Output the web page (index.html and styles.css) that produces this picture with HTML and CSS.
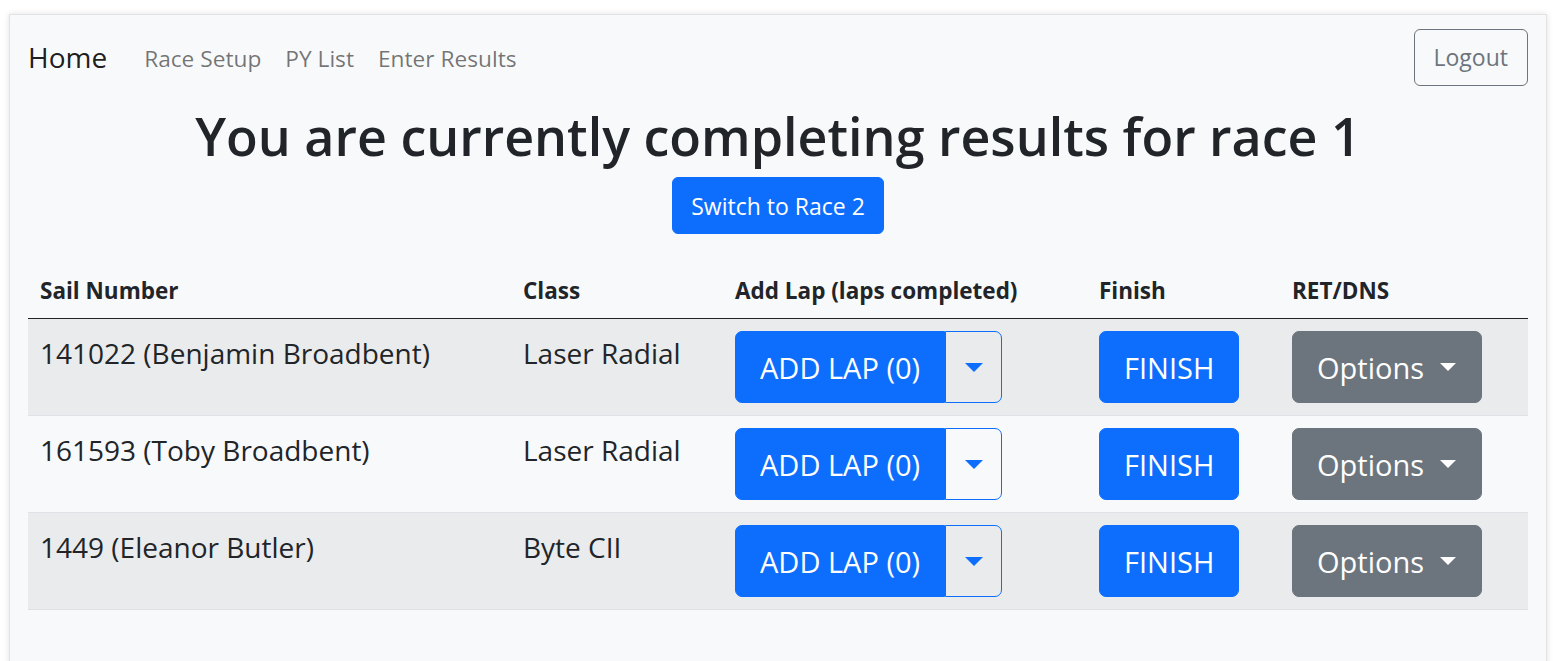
FILE: index.html
```html
<!DOCTYPE html>
<html lang="en">
<head>
<meta charset="utf-8">
<title>Enter Results</title>
<link rel="stylesheet" href="styles.css">
</head>
<body>
<div class="page">
  <nav class="navbar">
    <div class="nav-left">
      <a class="brand" href="#">Home</a>
      <ul class="nav-links">
        <li><a class="nav-link" href="#">Race Setup</a></li>
        <li><a class="nav-link" href="#">PY List</a></li>
        <li><a class="nav-link" href="#">Enter Results</a></li>
      </ul>
    </div>
    <button class="btn btn-outline-secondary" type="button">Logout</button>
  </nav>
  <main class="content">
    <h1 class="title">You are currently completing results for race 1</h1>
    <div class="switch-row">
      <button class="btn btn-primary" type="button">Switch to Race 2</button>
    </div>
    <table class="results">
      <colgroup>
        <col class="c-sail"><col class="c-class"><col class="c-lap"><col class="c-finish"><col class="c-opts">
      </colgroup>
      <thead>
        <tr><th>Sail Number</th><th>Class</th><th>Add Lap (laps completed)</th><th>Finish</th><th>RET/DNS</th></tr>
      </thead>
      <tbody>
        <tr class="odd">
          <td>141022 (Benjamin Broadbent)</td>
          <td>Laser Radial</td>
          <td><div class="btn-group"><button class="btn-lg btn-primary split-main" type="button">ADD LAP (0)</button><button class="btn-lg split-toggle" type="button"><span class="caret caret-blue"></span></button></div></td>
          <td><button class="btn-lg btn-primary" type="button">FINISH</button></td>
          <td><button class="btn-lg btn-secondary" type="button">Options<span class="caret caret-white"></span></button></td>
        </tr>
        <tr>
          <td>161593 (Toby Broadbent)</td>
          <td>Laser Radial</td>
          <td><div class="btn-group"><button class="btn-lg btn-primary split-main" type="button">ADD LAP (0)</button><button class="btn-lg split-toggle" type="button"><span class="caret caret-blue"></span></button></div></td>
          <td><button class="btn-lg btn-primary" type="button">FINISH</button></td>
          <td><button class="btn-lg btn-secondary" type="button">Options<span class="caret caret-white"></span></button></td>
        </tr>
        <tr class="odd">
          <td>1449 (Eleanor Butler)</td>
          <td>Byte CII</td>
          <td><div class="btn-group"><button class="btn-lg btn-primary split-main" type="button">ADD LAP (0)</button><button class="btn-lg split-toggle" type="button"><span class="caret caret-blue"></span></button></div></td>
          <td><button class="btn-lg btn-primary" type="button">FINISH</button></td>
          <td><button class="btn-lg btn-secondary" type="button">Options<span class="caret caret-white"></span></button></td>
        </tr>
      </tbody>
    </table>
  </main>
</div>
</body>
</html>
```
FILE: styles.css
```css
* { box-sizing: border-box; }

html, body {
  margin: 0;
  padding: 0;
  background: #ffffff;
  font-family: "Open Sans", "Noto Sans", sans-serif;
  color: #212529;
}

.page {
  margin: 14px 11px 0 9px;
  min-height: 720px;
  background: #f8f9fa;
  border: 1px solid #e1e3e5;
  box-shadow: 0 0 6px rgba(0, 0, 0, 0.12);
}

/* Navbar */
.navbar {
  display: flex;
  align-items: center;
  justify-content: space-between;
  height: 84px;
  padding: 12px 18px;
}

.nav-left {
  display: flex;
  align-items: center;
}

.brand {
  font-size: 28px;
  line-height: 45px;
  padding: 7.5px 0;
  margin-right: 25px;
  color: rgba(0, 0, 0, 0.9);
  text-decoration: none;
}

.nav-links {
  display: flex;
  list-style: none;
  margin: 0;
  padding: 0;
}

.nav-link {
  display: block;
  padding: 14px 12px 10px;
  font-size: 22.7px;
  line-height: 36px;
  color: rgba(0, 0, 0, 0.55);
  text-decoration: none;
}

/* Buttons */
.btn {
  display: inline-flex;
  align-items: center;
  height: 57px;
  font-family: inherit;
  font-size: 23px;
  line-height: 36px;
  padding: 9px 18px;
  border: 1px solid transparent;
  border-radius: 6px;
  cursor: pointer;
}

.btn-outline-secondary {
  background: transparent;
  border-color: #6c757d;
  color: #6c757d;
  padding: 9px 19px;
}

.btn-primary {
  background: #0d6efd;
  border-color: #0d6efd;
  color: #ffffff;
}

.btn-secondary {
  background: #6c757d;
  border-color: #6c757d;
  color: #ffffff;
}

.btn-lg {
  display: inline-flex;
  align-items: center;
  height: 72px;
  font-family: inherit;
  font-size: 29px;
  line-height: 45px;
  padding: 12px 24px;
  border: 1px solid transparent;
  border-radius: 7px;
  cursor: pointer;
}

.btn-lg.btn-primary { border-color: #0d6efd; }
.btn-lg.btn-secondary { border-color: #6c757d; padding-right: 25px; }

.btn-group {
  display: inline-flex;
  vertical-align: top;
}

.split-main {
  border-top-right-radius: 0;
  border-bottom-right-radius: 0;
}

.split-toggle {
  background: transparent;
  border-color: #0d6efd;
  border-top-left-radius: 0;
  border-bottom-left-radius: 0;
  padding-left: 18.5px;
  padding-right: 18.5px;
}

.caret {
  display: inline-block;
  width: 0;
  height: 0;
  border-top: 9px solid currentColor;
  border-left: 9px solid transparent;
  border-right: 9px solid transparent;
}

.caret-blue { color: #0d6efd; }
.caret-white { color: #ffffff; margin-left: 16px; border-left-width: 8px; border-right-width: 8px; border-top-width: 8.5px; }

/* Content */
.content {
  padding: 0 18px;
}

.title {
  margin: 1px 0 5px 0;
  font-size: 52px;
  line-height: 72px;
  font-weight: 600;
  text-align: center;
  color: #212529;
}

.switch-row {
  display: flex;
  justify-content: center;
}

.results {
  width: 100%;
  margin-top: 25px;
  border-collapse: collapse;
  table-layout: fixed;
}

.c-sail { width: 483px; }
.c-class { width: 212px; }
.c-lap { width: 364px; }
.c-finish { width: 193px; }
.c-opts { width: 248px; }

.results th {
  text-align: left;
  font-size: 22.5px;
  line-height: 36px;
  font-weight: 700;
  padding: 14px 12px 9px;
  border-bottom: 1px solid #212529;
  vertical-align: top;
}

.results td {
  font-size: 28px;
  line-height: 45px;
  padding: 12px;
  vertical-align: top;
  border-bottom: 1px solid #dee2e6;
}

.results tr.odd td {
  background: #eaebec;
}
```
